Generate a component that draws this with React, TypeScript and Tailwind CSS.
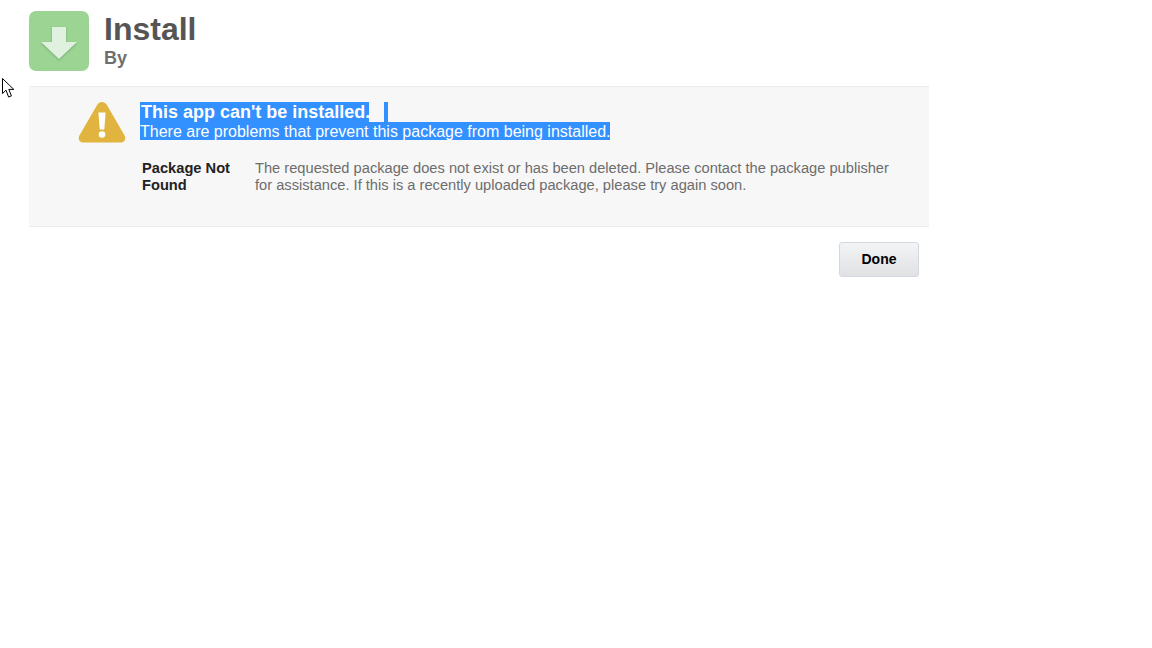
const font = "font-['Liberation_Sans',Arial,sans-serif]";

function InstallIcon() {
  return (
    <div className="flex h-[60px] w-[60px] items-center justify-center rounded-[7px] bg-[#9bd493]">
      <svg width="36" height="32" viewBox="0 0 36 32" className="translate-y-[2px] drop-shadow-[0_1px_1px_rgba(70,120,70,0.45)]">
        <path d="M11 0h14v15h11L18 32 0 15h11z" fill="#e0f1df" />
      </svg>
    </div>
  );
}

function WarningIcon() {
  return (
    <svg width="48" height="42" viewBox="0 0 48 42" className="-mt-px shrink-0">
      <path
        d="M24 1c2.400 0 4 1.300 5.200 3.400l17.400 30.200c1.800 3.300-.1 6.900-3.900 6.900H5.300c-3.800 0-5.700-3.600-3.900-6.900L18.800 4.400C20 2.300 21.600 1 24 1z"
        fill="#e0b43f"
      />
      <path d="M20.400 11.500h7.200l-1.300 17h-4.600z" fill="#ffffff" />
      <circle cx="24" cy="33.500" r="3.300" fill="#ffffff" />
    </svg>
  );
}

function Cursor() {
  return (
    <svg width="14" height="21" viewBox="0 0 14 21" className="absolute left-[2px] top-[78px]">
      <path d="M.5.500v15l3.500-3.300 2.600 6.800 2.800-1.100-2.600-6.500h5z" fill="#ffffff" stroke="#000000" strokeWidth="1" />
    </svg>
  );
}

export default function App() {
  return (
    <div className={`${font} relative h-[648px] w-[1152px] overflow-hidden bg-white`}>
      <Cursor />
      <div className="ml-[29px] w-[900px]">
        <header className="flex gap-[15px] pt-[11px]">
          <InstallIcon />
          <div>
            <h1 className="text-[32px] font-bold leading-[36px] text-[#555555]">Install</h1>
            <p className="mt-[1px] text-[18px] font-bold leading-[20px] text-[#6f6f6f]">By</p>
          </div>
        </header>

        <section className="mt-[15px] h-[141px] border-y border-[#ececec] bg-[#f7f7f7] pl-[49px] pr-[30px] pt-[15px]">
          <div className="flex gap-[14px]">
            <WarningIcon />
            <div className="flex-1">
              <div className="flex h-[20px]">
                <h2 className="w-[229px] whitespace-nowrap bg-[#3390ff] pl-px text-[18px] font-bold leading-[20px] text-white">
                  This app can't be installed.
                </h2>
                <span className="ml-[15px] h-[20px] w-[4px] bg-[#3390ff]" />
              </div>
              <p className="w-fit whitespace-nowrap bg-[#3390ff] pt-px text-[16px] leading-[17px] text-white">
                There are problems that prevent this package from being installed.
              </p>
              <div className="mt-[20px] flex pl-[2px] text-[14.67px] leading-[17px]">
                <div className="w-[113px] shrink-0 font-bold text-[#222222]">
                  Package Not
                  <br />
                  Found
                </div>
                <p className="text-[#6d6d6d]">
                  The requested package does not exist or has been deleted. Please contact the package publisher
                  <br />
                  for assistance. If this is a recently uploaded package, please try again soon.
                </p>
              </div>
            </div>
          </div>
        </section>

        <div className="mt-[15px] flex justify-end pr-[10px]">
          <button className="h-[35px] w-[80px] rounded-[3px] border border-[#d3d8e0] bg-gradient-to-b from-[#f3f4f5] to-[#dfe1e4] text-[14px] font-bold text-black">
            Done
          </button>
        </div>
      </div>
    </div>
  );
}
